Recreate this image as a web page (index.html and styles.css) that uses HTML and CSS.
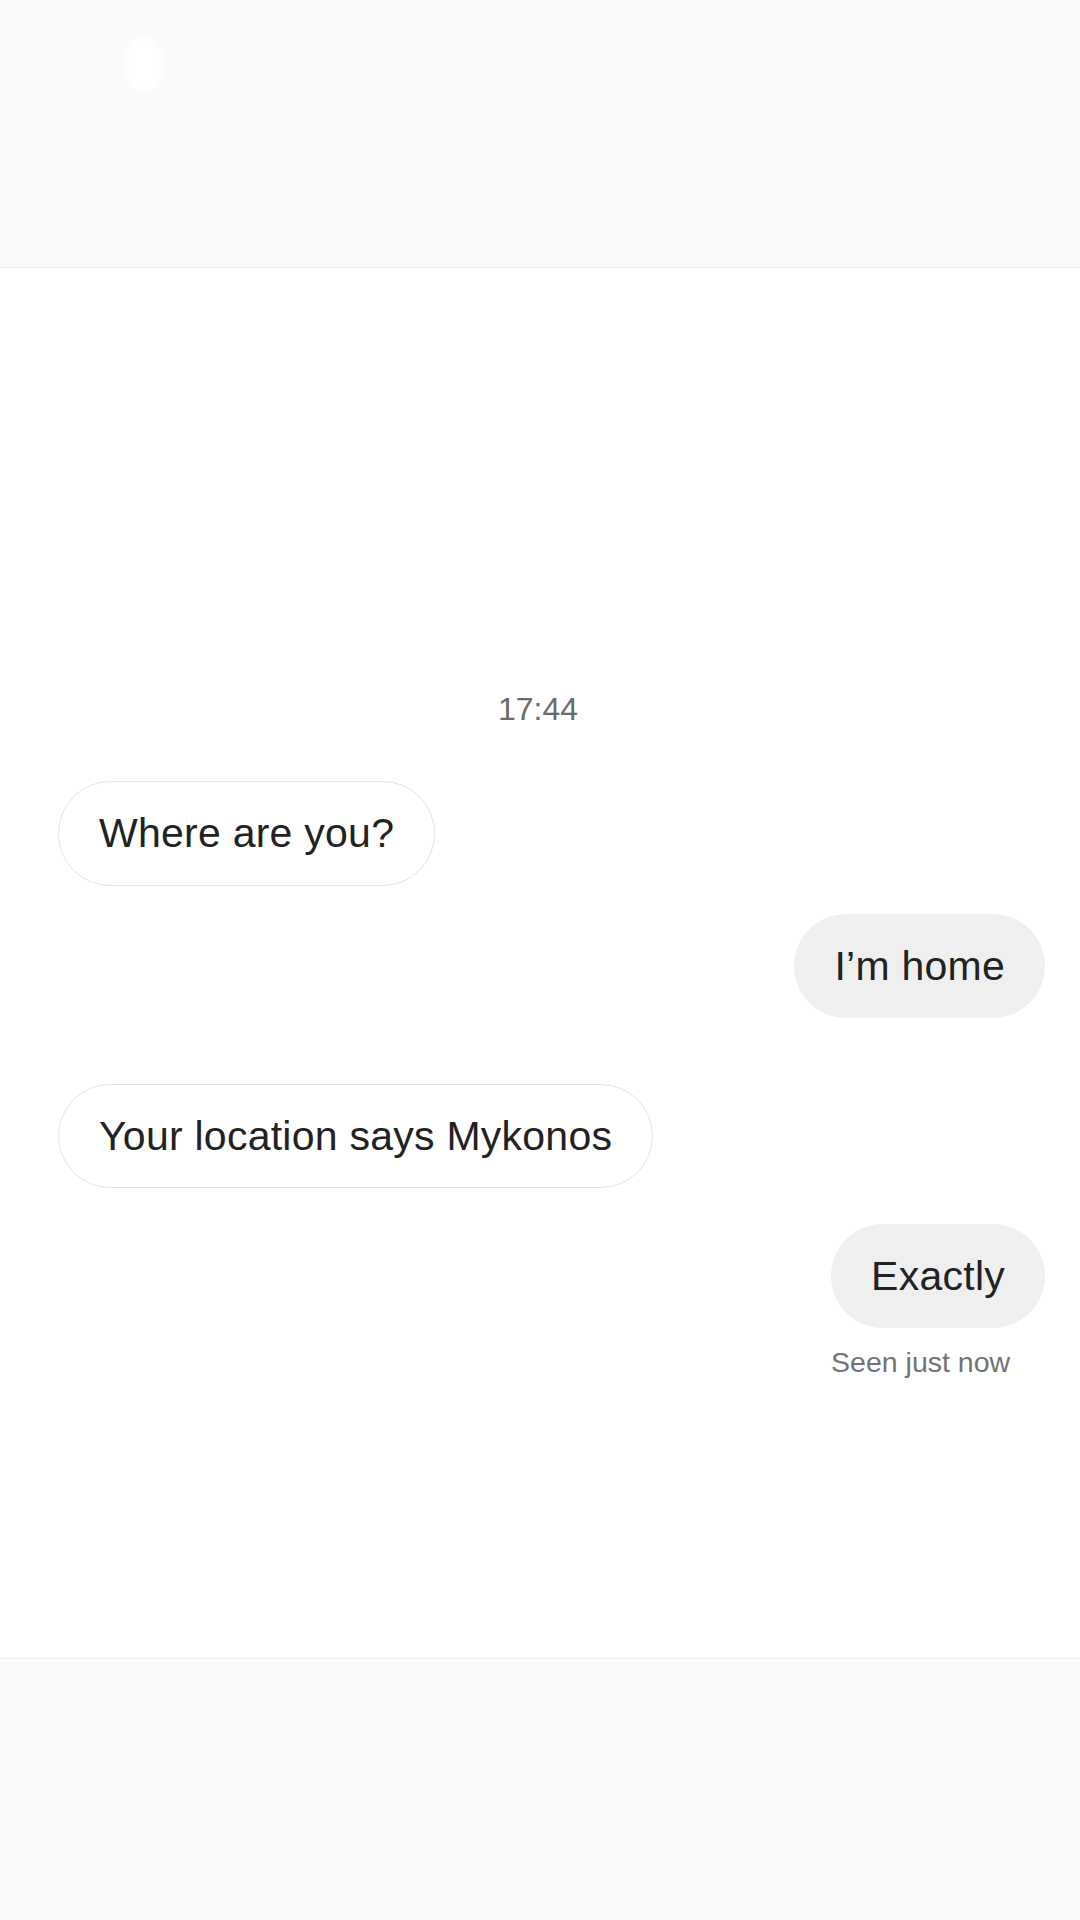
FILE: index.html
```html
<!DOCTYPE html>
<html lang="en">
<head>
  <meta charset="UTF-8">
  <title>Chat</title>
  <meta name="viewport" content="width=device-width, initial-scale=1.0">
  <link rel="stylesheet" href="styles.css">
</head>

<body>
  <div class="screen">
    <!-- top bar (faded) -->
    <header class="topbar">
      <div class="back-blur"></div>
    </header>

    <main class="thread">
      <div class="stamp">17:44</div>

      <div class="msg in first">Where are you?</div>
      <div class="msg out second">I’m home</div>
      <div class="msg in third">Your location says Mykonos</div>

      <div class="msg-group">
        <div class="msg out">Exactly</div>
        <div class="seen">Seen just now</div>
      </div>
    </main>

    <!-- composer area (empty) -->
    <footer class="composer"></footer>
  </div>
</body>
</html>
```

FILE: styles.css
```css
* {
  margin: 0;
  padding: 0;
  box-sizing: border-box;
}
body {
  font-family: "Liberation Sans", Arial, sans-serif;
  background-color: #ffffff;
  color: #222222;
}
.screen {
  width: 1080px;
  height: 1920px;
  display: flex;
  flex-direction: column;
}
.topbar {
  height: 268px;
  background-color: #fafafa;
  border-bottom: 1px solid #ebebeb;
  padding: 36px 0 0 124px;
}
.back-blur {
  width: 40px;
  height: 56px;
  border-radius: 45% 55% 50% 50%;
  background-color: #ffffff;
  filter: blur(4px);
}
.thread {
  flex: 1;
  display: flex;
  flex-direction: column;
  padding: 423px 35px 0 37px;
}
.stamp {
  align-self: center;
  margin-right: 6px;
  font-size: 32px;
  line-height: 36px;
  color: #6b6b6b;
}
.msg {
  height: 104px;
  padding: 0 40px;
  border-radius: 52px;
  display: flex;
  align-items: center;
  font-size: 41px;
  letter-spacing: 0.25px;
  white-space: nowrap;
}
.msg.in {
  align-self: flex-start;
  margin-left: 21px;
  background-color: #ffffff;
  border: 1px solid #e3e3e3;
}
.msg.out {
  align-self: flex-end;
  background-color: #efefef;
}
.first {
  margin-top: 54px;
  height: 105px;
}
.second {
  margin-top: 28px;
}
.third {
  margin-top: 66px;
}
.msg-group {
  align-self: flex-end;
  margin-top: 36px;
  display: flex;
  flex-direction: column;
  align-items: flex-start;
}
.seen {
  margin-top: 17px;
  font-size: 28.5px;
  line-height: 34px;
  color: #737373;
}
.composer {
  height: 262px;
  background-color: #fafafa;
  border-top: 1px solid #ebebeb;
}
```
